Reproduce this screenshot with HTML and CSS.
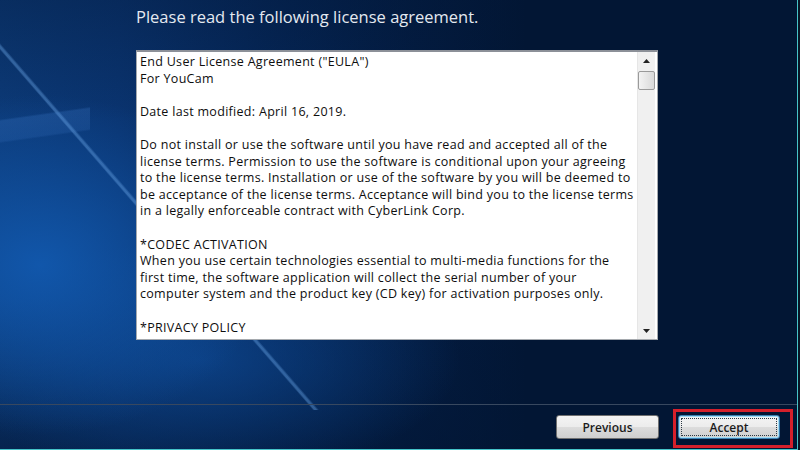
FILE: index.html
```html
<!DOCTYPE html>
<html lang="en">
<head>
<meta charset="utf-8">
<title>License Agreement</title>
<link rel="stylesheet" href="styles.css">
</head>
<body>
<div class="screen">
  <main class="main">
    <h1 class="title">Please read the following license agreement.</h1>
    <div class="eula">
      <div class="eula-text">
        <p>End User License Agreement ("EULA")<br>For YouCam</p>
        <p>Date last modified: April 16, 2019.</p>
        <p>Do not install or use the software until you have read and accepted all of the<br>license terms. Permission to use the software is conditional upon your agreeing<br>to the license terms. Installation or use of the software by you will be deemed to<br>be acceptance of the license terms. Acceptance will bind you to the license terms<br>in a legally enforceable contract with CyberLink Corp.</p>
        <p>*CODEC ACTIVATION<br>When you use certain technologies essential to multi-media functions for the<br>first time, the software application will collect the serial number of your<br>computer system and the product key (CD key) for activation purposes only.</p>
        <p>*PRIVACY POLICY</p>
      </div>
      <div class="scrollbar">
        <div class="sb-arrow">
          <svg width="7" height="4" viewBox="0 0 7 4"><polygon points="0,4 3.5,0 7,4" fill="#222"/></svg>
        </div>
        <div class="sb-thumb"></div>
        <div class="sb-track"></div>
        <div class="sb-arrow">
          <svg width="7" height="4" viewBox="0 0 7 4"><polygon points="0,0 7,0 3.5,4" fill="#222"/></svg>
        </div>
      </div>
    </div>
  </main>
  <footer class="footer">
    <button class="btn btn-prev" type="button">Previous</button>
    <div class="highlight">
      <button class="btn btn-default" type="button">Accept</button>
    </div>
  </footer>
</div>
</body>
</html>
```
FILE: styles.css
```css
html {
  background: #0a1626;
}
body {
  margin: 0;
  width: 800px;
  height: 450px;
  overflow: hidden;
}
.screen {
  box-sizing: border-box;
  width: 798px;
  height: 450px;
  display: flex;
  flex-direction: column;
  border-right: 1px solid #46c4c9;
  border-bottom: 1px solid #46c4c9;
  background-color: #021634;
  background-image:
    linear-gradient(49deg, transparent 236px, rgba(110, 170, 235, 0.4) 237.5px, rgba(110, 170, 235, 0.4) 239px, transparent 241px),
    linear-gradient(172deg, rgba(60, 120, 200, 0) 118px, rgba(60, 120, 200, 0.28) 120px, rgba(60, 120, 200, 0.2) 140px, rgba(60, 120, 200, 0) 142px),
    radial-gradient(ellipse 230px 170px at 40px 265px, rgba(18, 92, 180, 0.85) 0%, rgba(18, 92, 180, 0) 100%),
    radial-gradient(ellipse 260px 120px at 200px 360px, rgba(14, 74, 150, 0.7) 0%, rgba(14, 74, 150, 0) 100%),
    linear-gradient(180deg, rgba(2, 22, 52, 0.35) 0, rgba(2, 22, 52, 0) 120px, rgba(2, 22, 52, 0) 300px, rgba(2, 22, 52, 0.6) 449px),
    linear-gradient(90deg, #0c3a78 0, #0a3470 15%, #052657 35%, #031c42 52%, #021634 66%);
  background-size: 330px 410px, 90px 450px, auto, auto, auto, auto;
  background-repeat: no-repeat;
}
.main {
  flex: 1;
  padding-left: 136px;
  font-family: "Open Sans", "Liberation Sans", sans-serif;
}
.title {
  margin: 0;
  padding-top: 5px;
  height: 50px;
  box-sizing: border-box;
  font-size: 16.5px;
  font-weight: 400;
  line-height: 24px;
  color: #e4e9f0;
}
.eula {
  box-sizing: border-box;
  width: 522px;
  height: 290px;
  display: flex;
  background: #ffffff;
  border: 1px solid #a5a9ae;
  border-top: 2px solid #8c9098;
}
.eula-text {
  flex: 1;
  overflow: hidden;
  padding: 2px 0 0 3px;
  font-size: 12.5px;
  letter-spacing: 0.3px;
  line-height: 16.6px;
  color: #0e0e0e;
  white-space: nowrap;
}
.eula-text p {
  margin: 0 0 16.6px;
}
.scrollbar {
  width: 17px;
  margin: 0 2px 0 0;
  display: flex;
  flex-direction: column;
  background: #f0f0f0;
  border-left: 1px solid #e6e6e6;
}
.sb-arrow {
  height: 17px;
  display: flex;
  align-items: center;
  justify-content: center;
}
.sb-thumb {
  box-sizing: border-box;
  height: 19px;
  margin: 2px 0 0 0;
  border: 1px solid #9a9a9a;
  border-radius: 2px;
  background: linear-gradient(90deg, #f3f3f3 0, #e6e6e6 50%, #d9d9d9 100%);
}
.sb-track {
  flex: 1;
}
.footer {
  box-sizing: border-box;
  height: 45px;
  border-top: 1px solid #38485f;
  display: flex;
  justify-content: flex-end;
  align-items: flex-start;
  gap: 14px;
  padding: 4px 4px 0 0;
}
.btn {
  box-sizing: border-box;
  width: 103px;
  height: 24px;
  padding: 0;
  border: 1px solid #707070;
  border-radius: 3px;
  background: linear-gradient(180deg, #f4f4f4 0, #ececec 48%, #dcdcdc 52%, #cfcfcf 100%);
  font-family: "Open Sans", "Liberation Sans", sans-serif;
  font-size: 12px;
  font-weight: 600;
  color: #1b1b1b;
}
.btn-prev {
  margin-top: 6px;
}
.btn-default {
  width: 102px;
  border-color: #3c7fb1;
  box-shadow: inset 0 0 0 1px #9fdcf6;
  outline: 1px dotted #2c3a44;
  outline-offset: -4px;
}
.highlight {
  border: 3px solid #d5202b;
  padding: 3px 10px 6px 2px;
}
```
